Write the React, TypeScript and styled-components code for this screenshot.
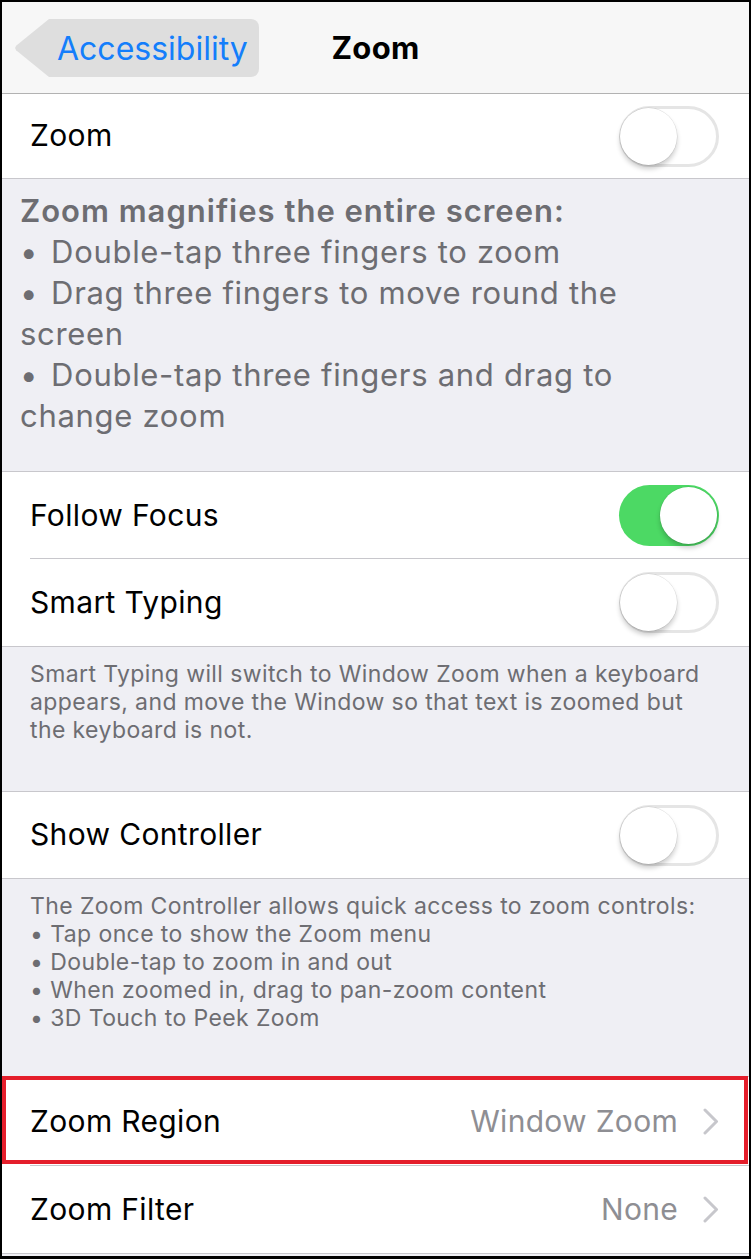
import React from "react";
import styled, { createGlobalStyle } from "styled-components";

const GlobalStyle = createGlobalStyle`
  html, body { margin: 0; padding: 0; background: #000; }
  body { font-family: Inter, "Noto Sans", "Liberation Sans", sans-serif; -webkit-font-smoothing: antialiased; }
  * { box-sizing: border-box; }
`;

const Frame = styled.div`
  width: 751px;
  height: 1259px;
  border-style: solid;
  border-color: #000;
  border-width: 2px 2px 3px 2px;
  background: #efeff4;
  overflow: hidden;
  display: flex;
  flex-direction: column;
`;

const NavBar = styled.header`
  position: relative;
  height: 92px;
  flex: none;
  background: #f7f7f7;
  border-bottom: 1px solid #b2b2b2;
  display: flex;
  align-items: center;
  justify-content: center;
`;

const BackButton = styled.button`
  position: absolute;
  left: 47px;
  top: 17px;
  height: 58px;
  width: 210px;
  border: none;
  background: #dedede;
  border-radius: 0 8px 8px 0;
  color: #147efb;
  font-family: inherit;
  font-size: 32px;
  font-weight: 400;
  padding: 0 0 0 8px;
  text-align: left;
  cursor: pointer;
  &::before {
    content: "";
    position: absolute;
    left: -35px;
    top: 0;
    width: 35px;
    height: 58px;
    background: #dedede;
    clip-path: polygon(100% 0, 100% 100%, 6% 54%, 3% 50%, 6% 46%);
  }
`;

const Title = styled.h1`
  margin: 0;
  font-size: 31px;
  font-weight: 700;
  color: #000;
  letter-spacing: 0.3px;
`;

const Group = styled.section`
  background: #fff;
  border-top: 1px solid #c8c7cc;
  border-bottom: 1px solid #c8c7cc;
  flex: none;
  &:first-of-type { border-top: none; }
`;

const Row = styled.div<{ $h?: number; $last?: boolean }>`
  position: relative;
  height: ${(p) => p.$h ?? 87}px;
  display: flex;
  align-items: center;
  padding: 0 30px 0 28px;
  &::after {
    content: "";
    display: ${(p) => (p.$last ? "none" : "block")};
    position: absolute;
    left: 28px;
    right: 0;
    bottom: 0;
    height: 1px;
    background: #c8c7cc;
  }
`;

const Label = styled.span`
  flex: 1;
  font-size: 30px;
  color: #000;
  letter-spacing: 0.35px;
  margin-bottom: 2px;
`;

const Value = styled.span`
  font-size: 30px;
  color: #8e8e93;
  margin-right: 25px;
  letter-spacing: 0.3px;
  margin-bottom: 2px;
`;

const Track = styled.div<{ $on?: boolean }>`
  position: relative;
  width: 100px;
  height: 61px;
  border-radius: 31px;
  background: ${(p) => (p.$on ? "#4cd964" : "#fff")};
  border: ${(p) => (p.$on ? "none" : "3px solid #e5e5e5")};
  flex: none;
`;

const Knob = styled.div<{ $on?: boolean }>`
  position: absolute;
  top: ${(p) => (p.$on ? 2 : -1)}px;
  left: ${(p) => (p.$on ? 41 : -2)}px;
  width: 57px;
  height: 57px;
  border-radius: 50%;
  background: #fff;
  box-shadow: 0 4px 5px rgba(0, 0, 0, 0.2), 0 0 0 0.5px rgba(0, 0, 0, 0.12);
`;

const Footer = styled.div<{ $size: number; $lh: number; $ls: number; $pl: number; $pt: number; $pb: number }>`
  flex: none;
  color: #6d6d72;
  font-size: ${(p) => p.$size}px;
  line-height: ${(p) => p.$lh}px;
  letter-spacing: ${(p) => p.$ls}px;
  padding: ${(p) => p.$pt}px 0 ${(p) => p.$pb}px ${(p) => p.$pl}px;
  white-space: pre;
`;

const Line = styled.div<{ $bold?: boolean }>`
  font-weight: ${(p) => (p.$bold ? 600 : 400)};
  letter-spacing: ${(p) => (p.$bold ? "1px" : "inherit")};
`;

const Highlight = styled.div`
  position: absolute;
  top: -1px;
  left: 0;
  right: 1px;
  bottom: 2px;
  border: 4px solid #e41e2b;
  pointer-events: none;
`;

function Switch({ on }: { on?: boolean }) {
  return (
    <Track $on={on}>
      <Knob $on={on} />
    </Track>
  );
}

function Chevron() {
  return (
    <svg width="16" height="27" viewBox="0 0 16 27" fill="none">
      <polyline points="2,2 13.5,13.5 2,25" stroke="#c7c7cc" strokeWidth="3" strokeLinecap="round" strokeLinejoin="round" />
    </svg>
  );
}

export default function App() {
  return (
    <>
      <GlobalStyle />
      <Frame>
        <NavBar>
          <BackButton>Accessibility</BackButton>
          <Title>Zoom</Title>
        </NavBar>

        <Group>
          <Row $h={84} $last>
            <Label>Zoom</Label>
            <Switch />
          </Row>
        </Group>

        <Footer $size={31} $lh={41} $ls={0.7} $pl={18} $pt={11} $pb={35}>
          <Line $bold>Zoom magnifies the entire screen:</Line>
          <Line>{"• \u200ADouble-tap three fingers to zoom"}</Line>
          <Line>{"• \u200ADrag three fingers to move round the"}</Line>
          <Line>screen</Line>
          <Line>{"• \u200ADouble-tap three fingers and drag to"}</Line>
          <Line>change zoom</Line>
        </Footer>

        <Group>
          <Row $h={87}>
            <Label>Follow Focus</Label>
            <Switch on />
          </Row>
          <Row $h={87} $last>
            <Label>Smart Typing</Label>
            <Switch />
          </Row>
        </Group>

        <Footer $size={23} $lh={28} $ls={0.4} $pl={28} $pt={13} $pb={47}>
          <Line>Smart Typing will switch to Window Zoom when a keyboard</Line>
          <Line>appears, and move the Window so that text is zoomed but</Line>
          <Line>the keyboard is not.</Line>
        </Footer>

        <Group>
          <Row $h={86} $last>
            <Label>Show Controller</Label>
            <Switch />
          </Row>
        </Group>

        <Footer $size={23} $lh={28} $ls={0.4} $pl={28} $pt={13} $pb={44}>
          <Line>The Zoom Controller allows quick access to zoom controls:</Line>
          <Line>• Tap once to show the Zoom menu</Line>
          <Line>• Double-tap to zoom in and out</Line>
          <Line>• When zoomed in, drag to pan-zoom content</Line>
          <Line>• 3D Touch to Peek Zoom</Line>
        </Footer>

        <Group>
          <Row $h={89}>
            <Label>Zoom Region</Label>
            <Value>Window Zoom</Value>
            <Chevron />
            <Highlight />
          </Row>
          <Row $h={87} $last>
            <Label>Zoom Filter</Label>
            <Value>None</Value>
            <Chevron />
          </Row>
        </Group>
      </Frame>
    </>
  );
}
